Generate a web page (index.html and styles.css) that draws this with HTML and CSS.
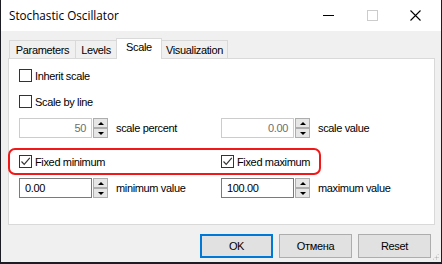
FILE: index.html
```html
<!DOCTYPE html>
<html>
<head>
<meta charset="utf-8">
<link rel="stylesheet" href="styles.css">
</head>
<body>
<div class="window">
  <div class="titlebar">
    <div class="title">Stochastic Oscillator</div>
    <div class="controls">
      <span class="ctl min"><svg width="11" height="11" viewBox="0 0 11 11"><path d="M0 5.5H11" stroke="#000" stroke-width="1"/></svg></span>
      <span class="ctl max"><svg width="11" height="11" viewBox="0 0 11 11"><rect x="0.5" y="0.5" width="10" height="10" fill="none" stroke="#cccccc" stroke-width="1"/></svg></span>
      <span class="ctl close"><svg width="11" height="11" viewBox="0 0 11 11"><path d="M0.5 0.5L10.5 10.5M10.5 0.5L0.5 10.5" stroke="#000" stroke-width="1.1"/></svg></span>
    </div>
  </div>
  <div class="content">
    <div class="tabs">
      <div class="tab t1">Parameters</div>
      <div class="tab t2">Levels</div>
      <div class="tab t3 active">Scale</div>
      <div class="tab t4">Visualization</div>
    </div>
    <div class="panel">
      <label class="check row1"><span class="box"></span><span>Inherit scale</span></label>
      <label class="check row2"><span class="box"></span><span>Scale by line</span></label>
      <div class="row row3">
        <div class="col">
          <div class="field disabled right">50</div>
          <div class="spin"><span class="up"><i></i></span><span class="down"><i></i></span></div>
          <span class="lbl">scale percent</span>
        </div>
        <div class="col">
          <div class="field disabled right">0.00</div>
          <div class="spin"><span class="up"><i></i></span><span class="down"><i></i></span></div>
          <span class="lbl">scale value</span>
        </div>
      </div>
      <div class="row row4">
        <div class="col">
          <label class="check"><span class="box checked"><svg width="11" height="11" viewBox="0 0 11 11"><path d="M1.5 5.5L4.2 8.3L9.8 1.8" fill="none" stroke="#333" stroke-width="1.2"/></svg></span><span>Fixed minimum</span></label>
        </div>
        <div class="col">
          <label class="check"><span class="box checked"><svg width="11" height="11" viewBox="0 0 11 11"><path d="M1.5 5.5L4.2 8.3L9.8 1.8" fill="none" stroke="#333" stroke-width="1.2"/></svg></span><span>Fixed maximum</span></label>
        </div>
      </div>
      <div class="row row5">
        <div class="col">
          <div class="field">0.00</div>
          <div class="spin"><span class="up"><i></i></span><span class="down"><i></i></span></div>
          <span class="lbl">minimum value</span>
        </div>
        <div class="col">
          <div class="field">100.00</div>
          <div class="spin"><span class="up"><i></i></span><span class="down"><i></i></span></div>
          <span class="lbl">maximum value</span>
        </div>
      </div>
    </div>
    <div class="buttons">
      <div class="btn default">OK</div>
      <div class="btn">Отмена</div>
      <div class="btn">Reset</div>
    </div>
    <div class="grip"></div>
  </div>
</div>
</body>
</html>
```

FILE: styles.css
```css
html, body {
  margin: 0;
  padding: 0;
}
body {
  background: #1c1c24;
  width: 442px;
  height: 264px;
  overflow: hidden;
  font-family: "Liberation Sans", Arial, sans-serif;
  font-size: 11px;
  letter-spacing: -0.35px;
  color: #000;
}
.window {
  margin-left: 1px;
  width: 440px;
  height: 262px;
  background: #f0f0f0;
  display: flex;
  flex-direction: column;
}
.titlebar {
  height: 31px;
  background: #fff;
  display: flex;
  align-items: center;
  justify-content: space-between;
}
.title {
  font-family: "Open Sans", "Noto Sans", sans-serif;
  font-size: 11.7px;
  letter-spacing: 0;
  padding-left: 8px;
  margin-top: -1px;
}
.controls {
  display: flex;
  align-items: center;
  height: 31px;
}
.ctl {
  display: flex;
  align-items: center;
  justify-content: center;
  height: 31px;
}
.ctl svg { display: block; }
.min { width: 11px; margin-right: 33px; }
.max { width: 11px; margin-right: 32px; }
.close { width: 11px; margin-right: 20px; }

.content {
  flex: 1;
  position: relative;
  padding: 7px 0 0 7px;
}
.tabs {
  display: flex;
  align-items: flex-end;
  height: 20px;
  padding-left: 1px;
}
.tab {
  box-sizing: border-box;
  height: 18px;
  border: 1px solid #d9d9d9;
  border-bottom: none;
  background: #f0f0f0;
  display: flex;
  align-items: center;
  justify-content: center;
  line-height: 1;
  padding-top: 1px;
}
.t1 { width: 67px; }
.t2 { width: 42px; margin-left: -1px; }
.t3 { width: 46px; margin-left: -1px; }
.t4 { width: 66px; margin-left: 0; border-left: none; }
.tab.active {
  height: 21px;
  background: #fff;
  margin-bottom: -1px;
  position: relative;
  z-index: 1;
  padding-top: 0;
  padding-bottom: 3px;
}
.panel {
  box-sizing: border-box;
  width: 427px;
  height: 167px;
  background: #fff;
  border: 1px solid #d9d9d9;
  padding: 10px 0 0 10px;
}
.check {
  display: flex;
  align-items: center;
  height: 13px;
  gap: 3px;
}
.box {
  box-sizing: border-box;
  width: 13px;
  height: 13px;
  border: 1px solid #333;
  background: #fff;
  display: flex;
  align-items: center;
  justify-content: center;
}
.box svg { display: block; }
.row1 { margin-bottom: 13px; }
.row2 { margin-bottom: 10px; }
.row {
  display: flex;
}
.col {
  width: 202px;
  display: flex;
  align-items: center;
}
.row3 { height: 20px; }
.row4 {
  position: relative;
  height: 13px;
  margin-top: 17px;
}
.row4::before {
  content: "";
  position: absolute;
  left: -11px;
  top: -7px;
  width: 313px;
  height: 27px;
  box-sizing: border-box;
  border: 2px solid #f01818;
  border-radius: 7px;
}
.row5 { height: 20px; margin-top: 10px; }
.field {
  box-sizing: border-box;
  width: 73px;
  height: 20px;
  border: 1px solid #7a7a7a;
  background: #fff;
  display: flex;
  align-items: center;
  padding: 0 5px;
}
.field.disabled {
  border-color: #cccccc;
  color: #6d6d6d;
}
.field.right { justify-content: flex-end; }
.spin {
  width: 15px;
  height: 20px;
  margin-left: 1px;
  display: flex;
  flex-direction: column;
  justify-content: space-between;
}
.spin span {
  box-sizing: border-box;
  height: 10px;
  border: 1px solid #adadad;
  background: #e6e6e6;
  display: flex;
  align-items: center;
  justify-content: center;
}
.spin .up i {
  width: 0; height: 0;
  border-left: 3px solid transparent;
  border-right: 3px solid transparent;
  border-bottom: 3px solid #000;
}
.spin .down i {
  width: 0; height: 0;
  border-left: 3px solid transparent;
  border-right: 3px solid transparent;
  border-top: 3px solid #000;
}
.lbl { margin-left: 8px; }
.buttons {
  display: flex;
  justify-content: flex-end;
  gap: 6px;
  margin-top: 9px;
  padding-right: 10px;
}
.btn {
  box-sizing: border-box;
  width: 73px;
  height: 24px;
  border: 1px solid #adadad;
  background: #e1e1e1;
  display: flex;
  align-items: center;
  justify-content: center;
}
.btn.default {
  border: 2px solid #0078d7;
}
.grip {
  position: absolute;
  right: 2px;
  bottom: 2px;
  width: 7px;
  height: 7px;
  background:
    radial-gradient(circle, #b8b8b8 45%, transparent 50%) 0 0 / 3px 3px;
  clip-path: polygon(100% 0, 100% 100%, 0 100%);
}
```
